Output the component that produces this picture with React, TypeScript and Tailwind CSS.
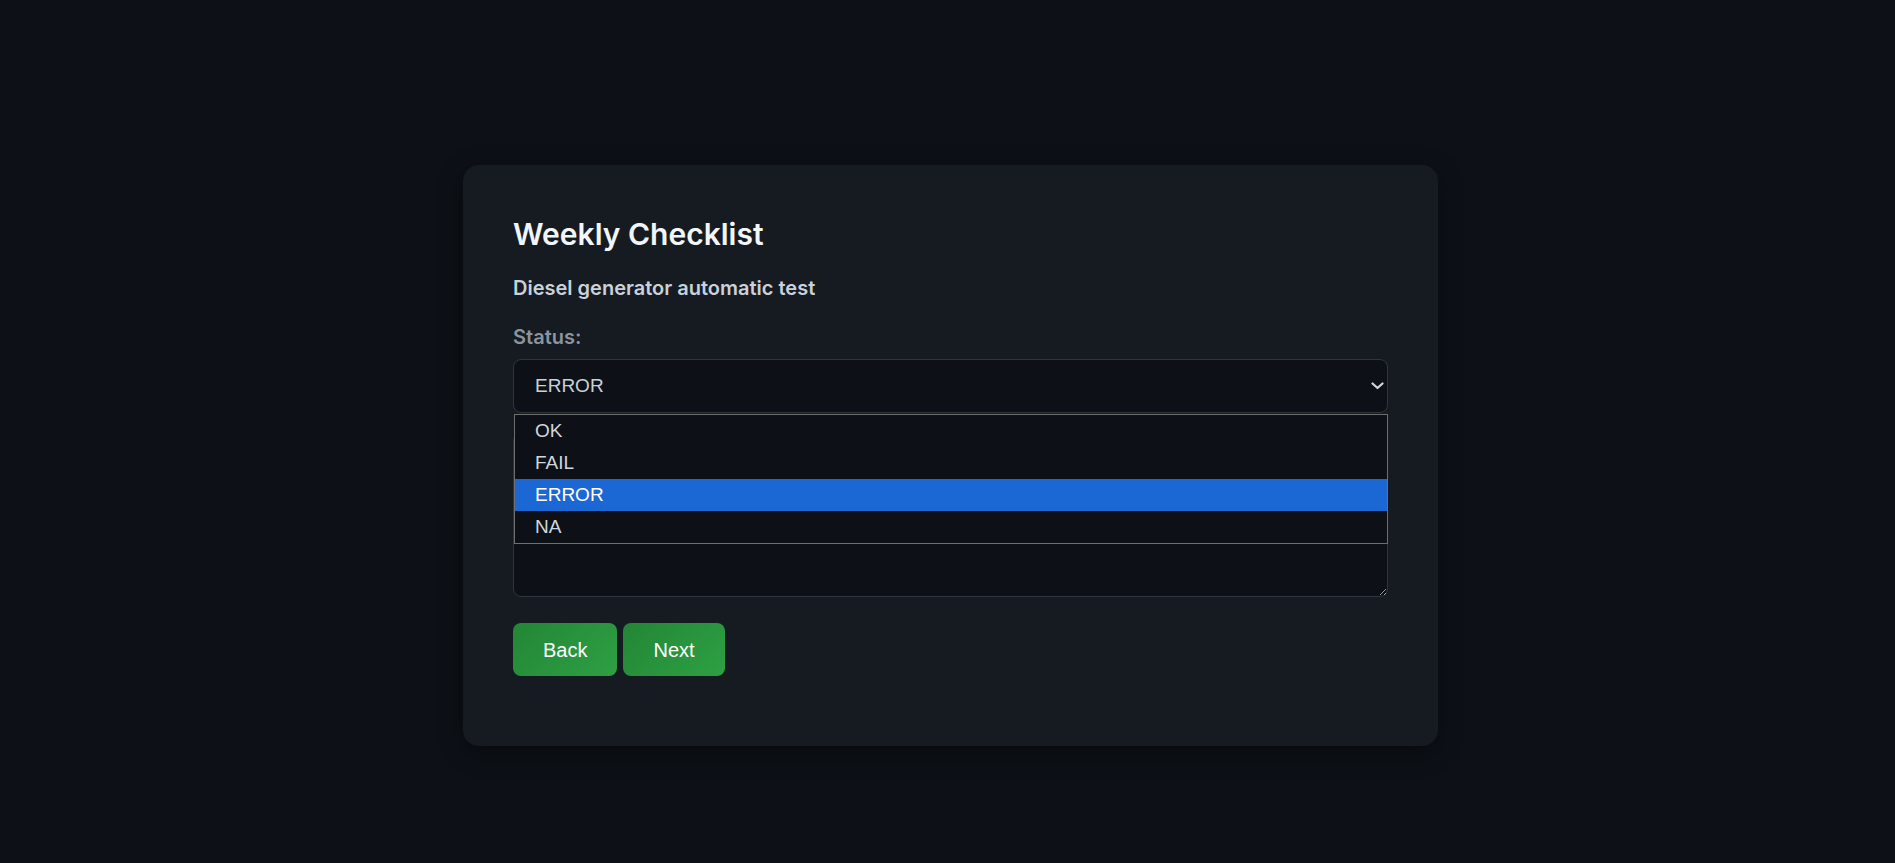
import React from "react";

export default function App() {
  const options = ["OK", "FAIL", "ERROR", "NA"];
  return (
    <div className="min-h-[863px] w-full bg-[#0d1117] pt-[165px] pl-[6px] flex justify-center items-start" style={{ fontFamily: "Inter, 'Noto Sans', sans-serif" }}>
      <div className="w-[975px] rounded-[16px] bg-[#161b22] px-[50px] pt-[50px] pb-[70px] shadow-[0_6px_24px_rgba(0,0,0,0.45)]">
        <h2 className="text-[30px] leading-[38px] font-semibold text-[#f0f6fc]">Weekly Checklist</h2>
        <p className="mt-[23px] text-[20px] leading-[24px] font-semibold text-[#c9d1d9]">Diesel generator automatic test</p>
        <label className="block mt-[25px] text-[20px] leading-[24px] font-semibold text-[#8b949e]">Status:</label>
        <div className="relative mt-[10px]">
          <div
            className="flex items-center justify-between h-[54px] rounded-[8px] border border-[#30363d] bg-[#0d1117] pl-[21px] pr-[3px] text-[19px] text-[#c9d1d9]"
            style={{ fontFamily: "'Liberation Sans', Arial, sans-serif" }}
          >
            <span>ERROR</span>
            <svg width="13" height="8" viewBox="0 0 13 8" className="text-[#d0d7de]">
              <path d="M1.5 1.5 L6.5 6 L11.5 1.5" fill="none" stroke="currentColor" strokeWidth="2.2" strokeLinecap="round" strokeLinejoin="round" />
            </svg>
          </div>
          <div
            className="absolute left-[1px] right-0 top-[55px] z-10 border border-[#6f6f6f] bg-[#0d1117] text-[19px] text-[#d0d7de]"
            style={{ fontFamily: "'Liberation Sans', Arial, sans-serif" }}
          >
            {options.map((o) => (
              <div
                key={o}
                className={
                  o === "ERROR"
                    ? "h-[32px] flex items-center pl-[20px] bg-[#1b67d3] text-white"
                    : "h-[32px] flex items-center pl-[20px]"
                }
              >
                {o}
              </div>
            ))}
          </div>
        </div>
        <textarea
          aria-label="Comments"
          className="block mt-[20px] w-full h-[164px] rounded-[8px] border border-[#30363d] bg-[#0d1117] text-[#c9d1d9] p-[12px] outline-none"
          style={{ colorScheme: "dark" }}
        />
        <div className="mt-[26px] flex gap-[6px]">
          <button
            className="h-[53px] px-[30px] rounded-[8px] bg-[linear-gradient(135deg,#238636,#2ea043)] text-white text-[20px]"
            style={{ fontFamily: "'Liberation Sans', Arial, sans-serif" }}
          >
            Back
          </button>
          <button
            className="h-[53px] px-[30px] rounded-[8px] bg-[linear-gradient(135deg,#238636,#2ea043)] text-white text-[20px]"
            style={{ fontFamily: "'Liberation Sans', Arial, sans-serif" }}
          >
            Next
          </button>
        </div>
      </div>
    </div>
  );
}
